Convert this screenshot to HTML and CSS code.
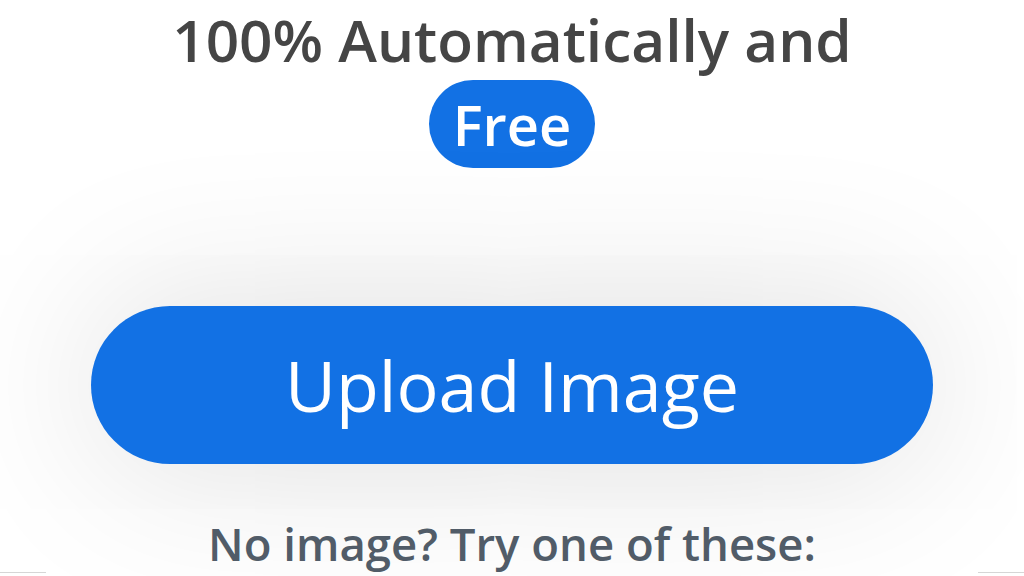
FILE: index.html
```html
<!DOCTYPE html>
<html lang="en">
<head>
    <meta charset="UTF-8">
    <meta name="viewport" content="width=device-width, initial-scale=1.0">
    <title>Remove background</title>
    <link rel="stylesheet" href="styles.css">
</head>
<body>
    <div class="hero">
        <h1 class="headline">
            <span class="headline-line">100% Automatically and</span>
            <span class="badge">Free</span>
        </h1>

        <div class="upload-area">
            <button class="upload-btn">Upload Image</button>
        </div>

        <p class="samples-title">No image? Try one of these:</p>

        <div class="samples">
            <div class="sample"></div>
            <div class="sample"></div>
        </div>
    </div>
</body>
</html>
```

FILE: styles.css
```css
:root {
    --primary: #1271e4;
    --heading: #454545;
    --muted: #515c68;
    --surface: #ffffff;
}

* {
    margin: 0;
    padding: 0;
    box-sizing: border-box;
}

body {
    font-family: "Open Sans", "Noto Sans", sans-serif;
    background: var(--surface);
    height: 576px;
    overflow: hidden;
}

.hero {
    display: flex;
    flex-direction: column;
    align-items: center;
}

.headline {
    display: flex;
    flex-direction: column;
    align-items: center;
    font-size: 58.5px;
    font-weight: 600;
    color: var(--heading);
    margin-top: 6px;
}

.headline-line {
    line-height: 67px;
}

.badge {
    margin-top: 7px;
    background: var(--primary);
    color: white;
    font-size: 56px;
    line-height: 88px;
    height: 88px;
    padding: 0 24px;
    border-radius: 44px;
}

.upload-area {
    margin-top: 138px;
}

.upload-btn {
    width: 842px;
    height: 158px;
    border: none;
    border-radius: 79px;
    background: var(--primary);
    color: white;
    font-family: inherit;
    font-size: 70px;
    font-weight: 400;
    cursor: pointer;
    box-shadow: 0 0 170px rgba(0,0,0,0.14);
}

.samples-title {
    margin-top: 51px;
    font-size: 45.5px;
    font-weight: 600;
    color: var(--muted);
    line-height: 56px;
}

.samples {
    width: 100%;
    display: flex;
    justify-content: space-between;
    margin-top: 1px;
}

.sample {
    width: 46px;
    height: 12px;
    border-top: 1px solid #d6d6d6;
}
```
